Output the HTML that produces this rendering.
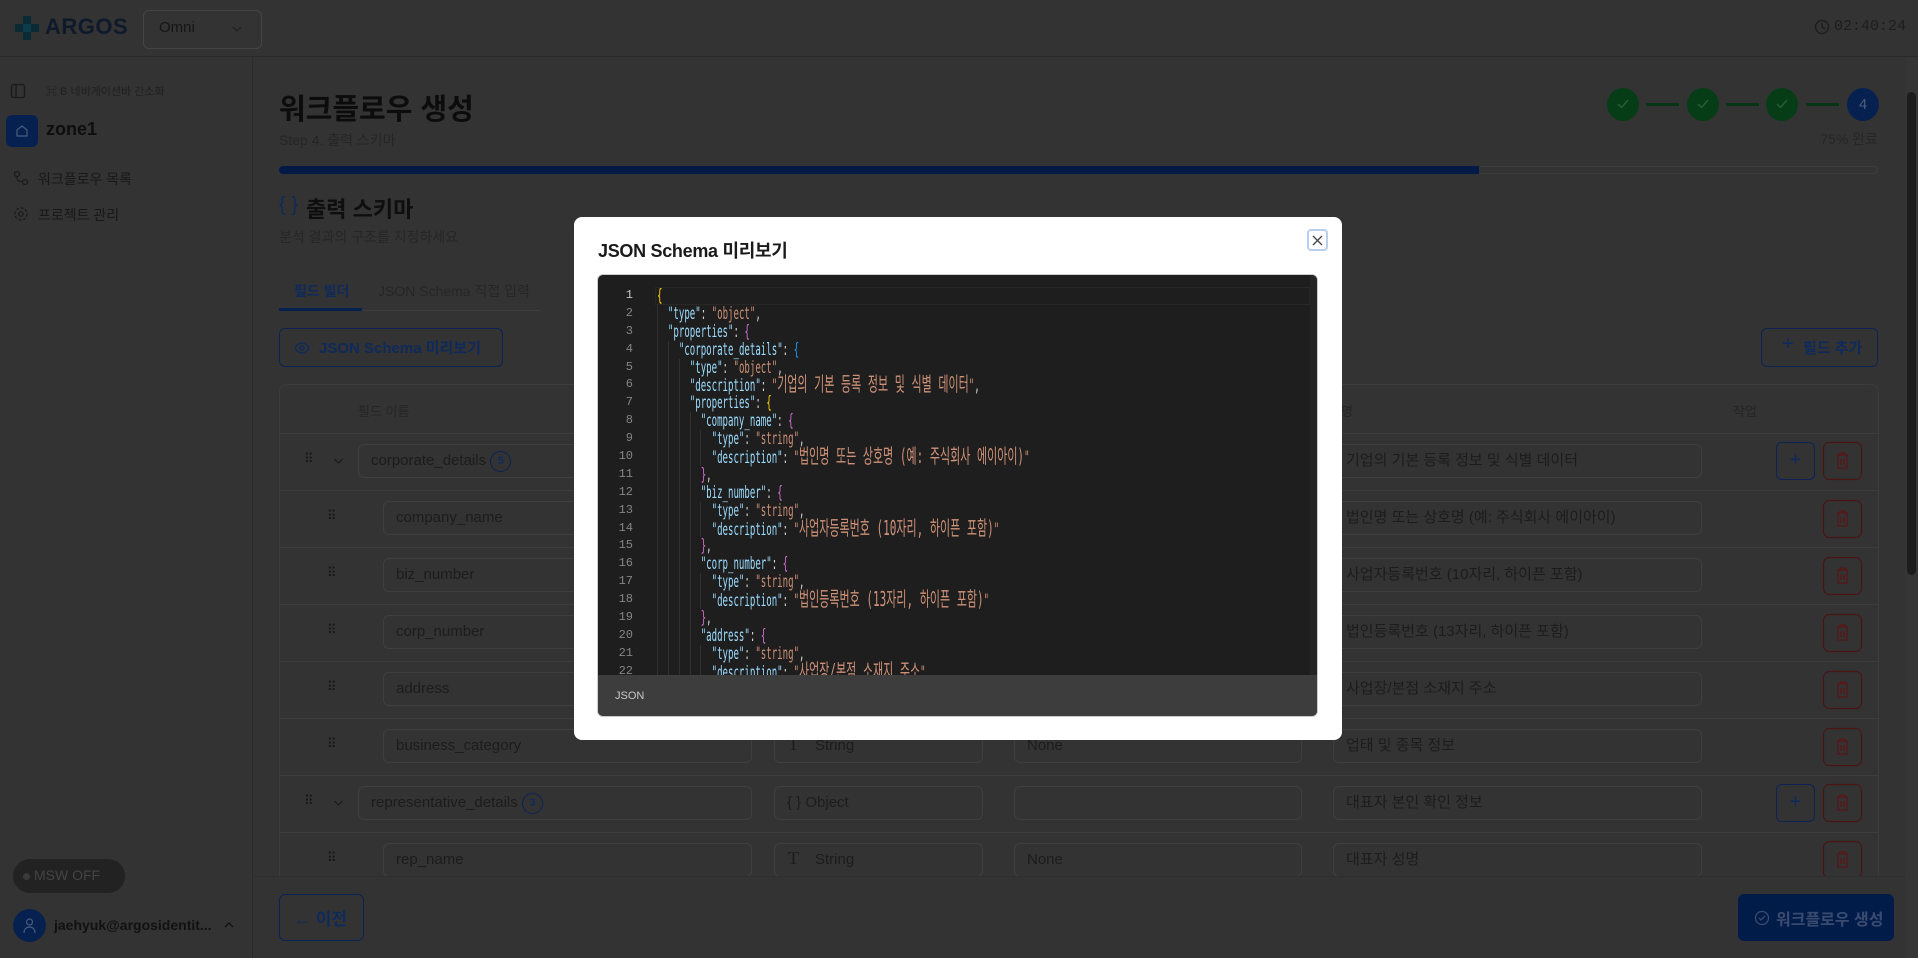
<!DOCTYPE html>
<html><head><meta charset="utf-8">
<style>
*{box-sizing:border-box;margin:0;padding:0}
html,body{width:1918px;height:958px;overflow:hidden}
body{background:#333;font-family:"Liberation Sans","Noto Sans CJK KR",sans-serif;color:#141414;position:relative}
.a{position:absolute}
.inp{position:absolute;height:34px;border:1px solid #3f3f3f;border-radius:6px;font-size:15px;line-height:32px;padding-left:12px;color:#1c1c1c;white-space:nowrap;overflow:hidden}
.row{position:absolute;left:279px;width:1599px;height:57px;border-top:1px solid #3c3c3c}
.btn{position:absolute;width:39px;height:38px;border-radius:6px}
.code{position:absolute;transform-origin:0 0;transform:scaleX(0.55);font-family:"DejaVu Sans Mono","Noto Sans CJK KR",monospace;font-size:16.5px;color:#d4d4d4}
.code div{height:17.9px;line-height:17.9px;white-space:pre;overflow:visible}
.code i{display:inline-block;width:2ch;height:17.9px;border-left:1px solid #404040;vertical-align:top}
.k{color:#9cdcfe}.s{color:#ce9178}.y{color:#ffd700}.p{color:#da70d6}.b{color:#179fff}
.h{font-size:20px;line-height:17.9px}
.ln{position:absolute;width:33px;text-align:right;font-family:"Liberation Mono",monospace;font-size:12px;color:#858585}
.ln div{height:17.9px;line-height:17.9px}
.dr{position:absolute;font-size:13px;color:#141414;letter-spacing:-1px}
</style></head><body>

<div class="a" style="left:0;top:0;width:1918px;height:57px;border-bottom:1px solid #2a2a2a"></div>
<svg class="a" style="left:15px;top:16px" width="24" height="24" viewBox="0 0 24 24"><path d="M8 0h8v8H8zM0 8h8v8H0zM16 8h8v8h-8zM8 16h8v8H8z" fill="#0b2a33"/><path d="M8 8h8v8H8z" fill="#0d3c4a"/></svg>
<div class="a" style="left:45px;top:14px;font-size:22px;font-weight:bold;color:#0e1a2c;letter-spacing:0.5px">ARGOS</div>
<div class="a" style="left:143px;top:10px;width:119px;height:39px;border:1px solid #454545;border-radius:6px"></div>
<div class="a" style="left:159px;top:19px;font-size:15px;color:#161616">Omni</div>
<svg class="a" style="left:231px;top:24px" width="12" height="10" viewBox="0 0 12 10"><path d="M2 3l4 4 4-4" stroke="#222" fill="none" stroke-width="1.3"/></svg>
<svg class="a" style="left:1814px;top:19px" width="16" height="16" viewBox="0 0 16 16"><circle cx="8" cy="8" r="6.5" stroke="#1d1d1d" fill="none" stroke-width="1.4"/><path d="M8 4v4l3 2" stroke="#1d1d1d" fill="none" stroke-width="1.4"/></svg>
<div class="a" style="left:1834px;top:18px;font-family:'Liberation Mono',monospace;font-size:15px;color:#1d1d1d">02:40:24</div>

<div class="a" style="left:252px;top:57px;width:1px;height:901px;background:#2b2b2b"></div>
<svg class="a" style="left:10px;top:83px" width="16" height="16" viewBox="0 0 16 16"><rect x="1.5" y="1.5" width="13" height="13" rx="2" stroke="#1a1a1a" fill="none" stroke-width="1.3"/><path d="M6 2v12" stroke="#1a1a1a" stroke-width="1.3"/></svg>
<div class="a" style="left:46px;top:83px;font-size:11px;color:#1f1f1f">⌘ B 네비게이션바 간소화</div>
<div class="a" style="left:6px;top:115px;width:32px;height:32px;border-radius:6px;background:#06214f"></div>
<svg class="a" style="left:15px;top:124px" width="14" height="14" viewBox="0 0 14 14"><path d="M2 6l5-4 5 4v6H2z" stroke="#4a5c80" fill="none" stroke-width="1.2"/></svg>
<div class="a" style="left:46px;top:119px;font-size:18px;font-weight:bold;color:#0e0e0e">zone1</div>
<svg class="a" style="left:13px;top:170px" width="16" height="16" viewBox="0 0 16 16"><circle cx="4" cy="4" r="2.5" stroke="#1a1a1a" fill="none" stroke-width="1.2"/><circle cx="12" cy="12" r="2.5" stroke="#1a1a1a" fill="none" stroke-width="1.2"/><path d="M4 6.5v2a3 3 0 003 3h2.5" stroke="#1a1a1a" fill="none" stroke-width="1.2"/></svg>
<div class="a" style="left:38px;top:169px;font-size:14px;color:#181818">워크플로우 목록</div>
<svg class="a" style="left:13px;top:206px" width="16" height="16" viewBox="0 0 16 16"><circle cx="8" cy="8" r="2.3" stroke="#1a1a1a" fill="none" stroke-width="1.2"/><circle cx="8" cy="8" r="6" stroke="#1a1a1a" fill="none" stroke-width="1.2" stroke-dasharray="3 1.6"/></svg>
<div class="a" style="left:38px;top:205px;font-size:14px;color:#181818">프로젝트 관리</div>
<div class="a" style="left:13px;top:859px;width:112px;height:34px;border-radius:17px;background:#222"></div>
<div class="a" style="left:23px;top:873px;width:7px;height:7px;border-radius:50%;background:#3a3a3a"></div>
<div class="a" style="left:34px;top:867px;font-size:14px;color:#444">MSW OFF</div>
<div class="a" style="left:13px;top:909px;width:33px;height:33px;border-radius:50%;background:#06214f"></div>
<svg class="a" style="left:22px;top:917px" width="15" height="17" viewBox="0 0 15 17"><circle cx="7.5" cy="5" r="3" stroke="#4a5c80" fill="none" stroke-width="1.2"/><path d="M2 16c0-4 2.5-6 5.5-6s5.5 2 5.5 6" stroke="#4a5c80" fill="none" stroke-width="1.2"/></svg>
<div class="a" style="left:54px;top:917px;font-size:14px;font-weight:bold;color:#111">jaehyuk@argosidentit...</div>
<svg class="a" style="left:224px;top:921px" width="10" height="8" viewBox="0 0 10 8"><path d="M1 6l4-4 4 4" stroke="#111" fill="none" stroke-width="1.3"/></svg>

<div class="a" style="left:279px;top:86px;font-size:29px;font-weight:bold;color:#0c0c0c">워크플로우 생성</div>
<div class="a" style="left:279px;top:130px;font-size:14px;color:#262626">Step 4. 출력 스키마</div>
<div class="a" style="left:1646px;top:103px;width:33px;height:3px;background:#063516"></div>
<div class="a" style="left:1726px;top:103px;width:33px;height:3px;background:#063516"></div>
<div class="a" style="left:1806px;top:103px;width:33px;height:3px;background:#063516"></div>
<div class="a" style="left:1607px;top:88px;width:32px;height:33px;border-radius:50%;background:#063d16"></div>
<div class="a" style="left:1687px;top:88px;width:32px;height:33px;border-radius:50%;background:#063d16"></div>
<div class="a" style="left:1766px;top:88px;width:32px;height:33px;border-radius:50%;background:#063d16"></div>
<svg class="a" style="left:1616px;top:98px" width="14" height="12" viewBox="0 0 14 12"><path d="M2 6l3.5 3.5L12 2" stroke="#2c5a37" fill="none" stroke-width="1.4"/></svg>
<svg class="a" style="left:1696px;top:98px" width="14" height="12" viewBox="0 0 14 12"><path d="M2 6l3.5 3.5L12 2" stroke="#2c5a37" fill="none" stroke-width="1.4"/></svg>
<svg class="a" style="left:1775px;top:98px" width="14" height="12" viewBox="0 0 14 12"><path d="M2 6l3.5 3.5L12 2" stroke="#2c5a37" fill="none" stroke-width="1.4"/></svg>
<div class="a" style="left:1847px;top:88px;width:32px;height:33px;border-radius:50%;background:#06214f;color:#4a5c80;font-size:15px;text-align:center;line-height:33px">4</div>
<div class="a" style="left:1780px;top:129px;width:98px;text-align:right;font-size:14px;color:#262626">75% 완료</div>
<div class="a" style="left:279px;top:166px;width:1599px;height:8px;border-radius:4px;border:1px solid #3c3c3c"></div>
<div class="a" style="left:279px;top:166px;width:1200px;height:8px;border-radius:4px 0 0 4px;background:#021a45"></div>

<div class="a" style="left:279px;top:194px;font-size:20px;color:#0e2a5c">{ }</div>
<div class="a" style="left:306px;top:192px;font-size:22px;font-weight:bold;color:#0e0e0e">출력 스키마</div>
<div class="a" style="left:279px;top:227px;font-size:14px;color:#262626">분석 결과의 구조를 지정하세요</div>
<div class="a" style="left:279px;top:310px;width:261px;height:1px;background:#3e3e3e"></div>
<div class="a" style="left:279px;top:308px;width:83px;height:3px;background:#06214f"></div>
<div class="a" style="left:294px;top:281px;font-size:14px;font-weight:bold;color:#0e2a5c">필드 빌더</div>
<div class="a" style="left:378px;top:281px;font-size:14px;color:#262626">JSON Schema 직접 입력</div>

<div class="a" style="left:279px;top:328px;width:224px;height:39px;border:1.5px solid #0b2253;border-radius:6px"></div>
<svg class="a" style="left:294px;top:340px" width="16" height="16" viewBox="0 0 16 16"><path d="M1 8s2.5-5 7-5 7 5 7 5-2.5 5-7 5-7-5-7-5z" stroke="#0e2a5c" fill="none" stroke-width="1.3"/><circle cx="8" cy="8" r="2" stroke="#0e2a5c" fill="none" stroke-width="1.3"/></svg>
<div class="a" style="left:319px;top:337px;font-size:15px;font-weight:bold;color:#0e2a5c">JSON Schema 미리보기</div>
<div class="a" style="left:1761px;top:328px;width:117px;height:39px;border:1.5px solid #0b2253;border-radius:6px"></div>
<div class="a" style="left:1782px;top:333px;font-size:20px;color:#0e2a5c">+</div>
<div class="a" style="left:1803px;top:337px;font-size:15px;font-weight:bold;color:#0e2a5c">필드 추가</div>

<div class="a" style="left:0;top:0;width:1904px;height:876px;overflow:hidden">
<div class="a" style="left:279px;top:384px;width:1600px;height:520px;border:1px solid #3c3c3c;border-radius:8px"></div>
<div class="a" style="left:358px;top:401px;font-size:13px;color:#242424">필드 이름</div>
<div class="a" style="left:1329px;top:401px;font-size:13px;color:#242424">설명</div>
<div class="a" style="left:1733px;top:401px;font-size:13px;color:#242424">작업</div>
<div class="row" style="top:433px"></div>
<div class="row" style="top:490px"></div>
<div class="row" style="top:547px"></div>
<div class="row" style="top:604px"></div>
<div class="row" style="top:661px"></div>
<div class="row" style="top:718px"></div>
<div class="row" style="top:775px"></div>
<div class="row" style="top:832px"></div>

<div class="dr" style="left:304px;top:451px">⠿</div>
<svg class="a" style="left:333px;top:457px" width="11" height="8" viewBox="0 0 11 8"><path d="M1.5 2l4 4 4-4" stroke="#1a1a1a" fill="none" stroke-width="1.2"/></svg>
<div class="inp" style="left:358px;top:444px;width:394px">corporate_details <span style="display:inline-block;width:21px;height:21px;border:1.3px solid #0b2253;border-radius:50%;font-size:11px;line-height:18px;text-align:center;color:#0e2a5c;vertical-align:1px;font-weight:bold">5</span></div>
<div class="inp" style="left:1333px;top:444px;width:369px">기업의 기본 등록 정보 및 식별 데이터</div>
<div class="dr" style="left:327px;top:508px">⠿</div>
<div class="inp" style="left:383px;top:501px;width:369px">company_name</div>
<div class="inp" style="left:1333px;top:501px;width:369px">법인명 또는 상호명 (예: 주식회사 에이아이)</div>
<div class="dr" style="left:327px;top:565px">⠿</div>
<div class="inp" style="left:383px;top:558px;width:369px">biz_number</div>
<div class="inp" style="left:1333px;top:558px;width:369px">사업자등록번호 (10자리, 하이픈 포함)</div>
<div class="dr" style="left:327px;top:622px">⠿</div>
<div class="inp" style="left:383px;top:615px;width:369px">corp_number</div>
<div class="inp" style="left:1333px;top:615px;width:369px">법인등록번호 (13자리, 하이픈 포함)</div>
<div class="dr" style="left:327px;top:679px">⠿</div>
<div class="inp" style="left:383px;top:672px;width:369px">address</div>
<div class="inp" style="left:1333px;top:672px;width:369px">사업장/본점 소재지 주소</div>
<div class="dr" style="left:327px;top:736px">⠿</div>
<div class="inp" style="left:383px;top:729px;width:369px">business_category</div>
<div class="inp" style="left:774px;top:729px;width:209px;padding-left:40px">String</div>
<div class="a" style="left:788px;top:734px;font-size:18px;font-family:'Liberation Serif',serif;color:#1c1c1c">T</div>
<div class="inp" style="left:1014px;top:729px;width:288px">None</div>
<div class="inp" style="left:1333px;top:729px;width:369px">업태 및 종목 정보</div>
<div class="dr" style="left:304px;top:793px">⠿</div>
<svg class="a" style="left:333px;top:799px" width="11" height="8" viewBox="0 0 11 8"><path d="M1.5 2l4 4 4-4" stroke="#1a1a1a" fill="none" stroke-width="1.2"/></svg>
<div class="inp" style="left:358px;top:786px;width:394px">representative_details <span style="display:inline-block;width:21px;height:21px;border:1.3px solid #0b2253;border-radius:50%;font-size:11px;line-height:18px;text-align:center;color:#0e2a5c;vertical-align:1px;font-weight:bold">3</span></div>
<div class="inp" style="left:774px;top:786px;width:209px">{ } Object</div>
<div class="inp" style="left:1014px;top:786px;width:288px"></div>
<div class="inp" style="left:1333px;top:786px;width:369px">대표자 본인 확인 정보</div>
<div class="dr" style="left:327px;top:850px">⠿</div>
<div class="inp" style="left:383px;top:843px;width:369px">rep_name</div>
<div class="inp" style="left:774px;top:843px;width:209px;padding-left:40px">String</div>
<div class="a" style="left:788px;top:848px;font-size:18px;font-family:'Liberation Serif',serif;color:#1c1c1c">T</div>
<div class="inp" style="left:1014px;top:843px;width:288px">None</div>
<div class="inp" style="left:1333px;top:843px;width:369px">대표자 성명</div>

<div class="btn" style="left:1776px;top:442px;border:1.2px solid #0b2253;color:#0e2a5c;font-size:20px;text-align:center;line-height:34px">+</div>
<div class="btn" style="left:1776px;top:784px;border:1.2px solid #0b2253;color:#0e2a5c;font-size:20px;text-align:center;line-height:34px">+</div>
<svg class="a" style="left:0;top:0" width="1904" height="876">
<defs><g id="tr"><rect x="0.5" y="0.5" width="38" height="37" rx="6" stroke="#4a1414" fill="none" stroke-width="1.2"/><path d="M14 13h11M17 13v-2h5v2M15 13v13h9V13M18 17v6M21 17v6" stroke="#5a1616" fill="none" stroke-width="1.3"/></g></defs>
<use href="#tr" x="1823" y="442"/><use href="#tr" x="1823" y="500"/><use href="#tr" x="1823" y="557"/><use href="#tr" x="1823" y="614"/><use href="#tr" x="1823" y="671"/><use href="#tr" x="1823" y="728"/><use href="#tr" x="1823" y="784"/><use href="#tr" x="1823" y="841"/>
</svg>
</div>

<div class="a" style="left:253px;top:876px;width:1652px;height:1px;background:#2f2f2f"></div>
<div class="a" style="left:279px;top:894px;width:85px;height:47px;border:1.5px solid #0b2253;border-radius:6px"></div>
<div class="a" style="left:294px;top:905px;font-size:17px;font-weight:bold;color:#0e2a5c">← 이전</div>
<div class="a" style="left:1738px;top:894px;width:156px;height:47px;border-radius:6px;background:#021c4a"></div>
<svg class="a" style="left:1754px;top:910px" width="16" height="16" viewBox="0 0 16 16"><circle cx="8" cy="8" r="6.5" stroke="#3a4b70" fill="none" stroke-width="1.3"/><path d="M5 8l2 2 4-4" stroke="#3a4b70" fill="none" stroke-width="1.3"/></svg>
<div class="a" style="left:1776px;top:906px;font-size:16px;font-weight:bold;color:#3a4b70">워크플로우 생성</div>

<div class="a" style="left:1905px;top:57px;width:13px;height:901px;background:#353535"></div>
<div class="a" style="left:1907px;top:92px;width:9px;height:483px;border-radius:5px;background:#1c1c1c"></div>

<div class="a" style="left:574px;top:217px;width:768px;height:523px;background:#fff;border-radius:8px"></div>
<div class="a" style="left:598px;top:237px;font-size:18px;font-weight:bold;color:#1a1a1a;letter-spacing:-0.3px">JSON Schema 미리보기</div>
<div class="a" style="left:1307px;top:229px;width:21px;height:22px;border:2px solid #b9cff2;border-radius:4px"></div>
<svg class="a" style="left:1312px;top:235px" width="11" height="11" viewBox="0 0 11 11"><path d="M1 1l9 9M10 1l-9 9" stroke="#444" stroke-width="1.3"/></svg>
<div class="a" style="left:598px;top:275px;width:719px;height:441px;background:#1e1e1e;border-radius:5px;overflow:hidden;box-shadow:0 0 0 1px #ccc">
  <div class="a" style="left:57px;top:12px;width:655px;height:18px;border:1px solid #282828"></div>
  <div class="a" style="left:712px;top:0;width:7px;height:400px;background:#252525"></div>
  <div class="ln" style="left:2px;top:12px">
<div style="color:#c6c6c6">1</div><div>2</div><div>3</div><div>4</div><div>5</div><div>6</div><div>7</div><div>8</div><div>9</div><div>10</div><div>11</div><div>12</div><div>13</div><div>14</div><div>15</div><div>16</div><div>17</div><div>18</div><div>19</div><div>20</div><div>21</div><div>22</div>
  </div>
  <div class="code" style="left:59px;top:12px">
<div><span class="y">{</span></div>
<div><i></i><span class="k">"type"</span>: <span class="s">"object"</span>,</div>
<div><i></i><span class="k">"properties"</span>: <span class="p">{</span></div>
<div><i></i><i></i><span class="k">"corporate_details"</span>: <span class="b">{</span></div>
<div><i></i><i></i><i></i><span class="k">"type"</span>: <span class="s">"object"</span>,</div>
<div><i></i><i></i><i></i><span class="k">"description"</span>: <span class="s">"<span class="h">기업의 기본 등록 정보 및 식별 데이터</span>"</span>,</div>
<div><i></i><i></i><i></i><span class="k">"properties"</span>: <span class="y">{</span></div>
<div><i></i><i></i><i></i><i></i><span class="k">"company_name"</span>: <span class="p">{</span></div>
<div><i></i><i></i><i></i><i></i><i></i><span class="k">"type"</span>: <span class="s">"string"</span>,</div>
<div><i></i><i></i><i></i><i></i><i></i><span class="k">"description"</span>: <span class="s">"<span class="h">법인명 또는 상호명 (예: 주식회사 에이아이)</span>"</span></div>
<div><i></i><i></i><i></i><i></i><span class="p">}</span>,</div>
<div><i></i><i></i><i></i><i></i><span class="k">"biz_number"</span>: <span class="p">{</span></div>
<div><i></i><i></i><i></i><i></i><i></i><span class="k">"type"</span>: <span class="s">"string"</span>,</div>
<div><i></i><i></i><i></i><i></i><i></i><span class="k">"description"</span>: <span class="s">"<span class="h">사업자등록번호 (10자리, 하이픈 포함)</span>"</span></div>
<div><i></i><i></i><i></i><i></i><span class="p">}</span>,</div>
<div><i></i><i></i><i></i><i></i><span class="k">"corp_number"</span>: <span class="p">{</span></div>
<div><i></i><i></i><i></i><i></i><i></i><span class="k">"type"</span>: <span class="s">"string"</span>,</div>
<div><i></i><i></i><i></i><i></i><i></i><span class="k">"description"</span>: <span class="s">"<span class="h">법인등록번호 (13자리, 하이픈 포함)</span>"</span></div>
<div><i></i><i></i><i></i><i></i><span class="p">}</span>,</div>
<div><i></i><i></i><i></i><i></i><span class="k">"address"</span>: <span class="p">{</span></div>
<div><i></i><i></i><i></i><i></i><i></i><span class="k">"type"</span>: <span class="s">"string"</span>,</div>
<div><i></i><i></i><i></i><i></i><i></i><span class="k">"description"</span>: <span class="s">"<span class="h">사업장/본점 소재지 주소</span>"</span></div>
  </div>
  <div class="a" style="left:0;top:400px;width:719px;height:41px;background:#3d3d3d"></div>
  <div class="a" style="left:17px;top:415px;font-size:11px;color:#c8c8c8">JSON</div>
</div>
</body></html>
